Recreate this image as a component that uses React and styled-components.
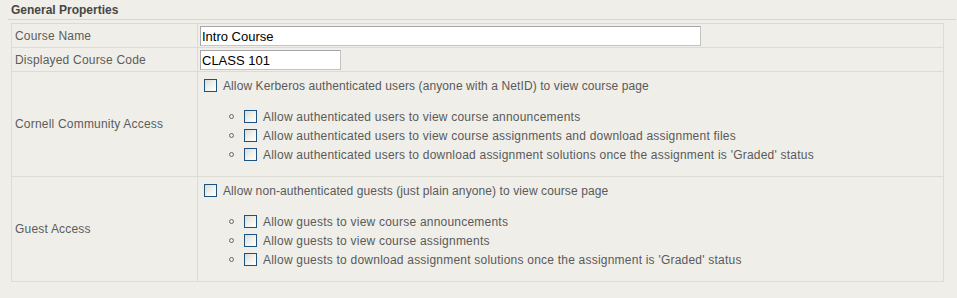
import styled, { createGlobalStyle } from 'styled-components'

const GlobalStyle = createGlobalStyle`
    body {
        margin: 0;
        background: #efeee8;
        font-family: "Liberation Sans", Arial, sans-serif;
    }
`

const Page = styled.div`
    padding: 4px 1px 0 8px;
    width: 948px;
`

const Heading = styled.div`
    padding: 0 0 2px 3px;
    font-size: 12px;
    font-weight: bold;
    color: #464646;
    line-height: 13px;
    border-bottom: 1px solid #d6d5ce;
`

const Table = styled.table`
    margin: 3px 0 0 3px;
    width: 933px;
    border-collapse: collapse;
    border: 1px solid #dcdbd4;
`

const Row = styled.tr`
    border-bottom: 1px solid #dcdbd4;
`

const Label = styled.td`
    width: 182px;
    padding: 0 0 0 3px;
    font-size: 12px;
    letter-spacing: 0.2px;
    color: #5c5c5c;
    border-right: 1px solid #dcdbd4;
    vertical-align: middle;
`

const Value = styled.td`
    padding: ${p => (p.$options ? '4px 0 0 2px' : '2px 0 1px 2px')};
    vertical-align: top;
`

const TextInput = styled.input`
    box-sizing: border-box;
    width: ${p => p.$width}px;
    height: 20px;
    margin: 0;
    padding: 0 1px;
    font-family: "Liberation Sans", Arial, sans-serif;
    font-size: 13px;
    color: #000;
    background: #fff;
    border: 1px solid #a7a6aa;
    border-right-color: #c4c3c0;
    border-bottom-color: #c4c3c0;
    display: block;
    outline: none;
`

const Option = styled.label`
    display: flex;
    align-items: center;
    height: 19px;
    padding-left: ${p => (p.$sub ? 0 : 4)}px;
    font-size: 12px;
    color: #5a5a5a;
    letter-spacing: ${p => (p.$sub ? 0.22 : 0.1)}px;
`

const Box = styled.span`
    box-sizing: border-box;
    width: 13px;
    height: 13px;
    margin-right: 6px;
    flex: none;
    border: 1px solid #1c5180;
    background: linear-gradient(135deg, #dcdcd6 0%, #f2f2ee 55%, #ffffff 100%);
`

const SubList = styled.ul`
    list-style: none;
    margin: 12px 0 12px 0;
    padding: 0 0 0 29px;
`

const SubItem = styled.li`
    display: flex;
    align-items: center;
    height: 19px;
`

const Bullet = styled.span`
    box-sizing: border-box;
    width: 5px;
    height: 5px;
    border: 1px solid #666;
    border-radius: 50%;
    margin-right: 10px;
    flex: none;
`

function Check({ children, sub }) {
    return (
        <Option $sub={sub}>
            <Box />
            {children}
        </Option>
    )
}

function AccessOptions({ main, subs }) {
    return (
        <>
            <Check>{main}</Check>
            <SubList>
                {subs.map(s => (
                    <SubItem key={s}>
                        <Bullet />
                        <Check sub>{s}</Check>
                    </SubItem>
                ))}
            </SubList>
        </>
    )
}

export default function App() {
    return (
        <>
            <GlobalStyle />
            <Page>
                <Heading>General Properties</Heading>
                <Table>
                    <tbody>
                        <Row>
                            <Label>Course Name</Label>
                            <Value>
                                <TextInput $width={501} defaultValue="Intro Course" />
                            </Value>
                        </Row>
                        <Row>
                            <Label>Displayed Course Code</Label>
                            <Value>
                                <TextInput $width={141} defaultValue="CLASS 101" />
                            </Value>
                        </Row>
                        <Row>
                            <Label>Cornell Community Access</Label>
                            <Value $options>
                                <AccessOptions
                                    main="Allow Kerberos authenticated users (anyone with a NetID) to view course page"
                                    subs={[
                                        'Allow authenticated users to view course announcements',
                                        'Allow authenticated users to view course assignments and download assignment files',
                                        "Allow authenticated users to download assignment solutions once the assignment is 'Graded' status",
                                    ]}
                                />
                            </Value>
                        </Row>
                        <Row>
                            <Label>Guest Access</Label>
                            <Value $options>
                                <AccessOptions
                                    main="Allow non-authenticated guests (just plain anyone) to view course page"
                                    subs={[
                                        'Allow guests to view course announcements',
                                        'Allow guests to view course assignments',
                                        "Allow guests to download assignment solutions once the assignment is 'Graded' status",
                                    ]}
                                />
                            </Value>
                        </Row>
                    </tbody>
                </Table>
            </Page>
        </>
    )
}
